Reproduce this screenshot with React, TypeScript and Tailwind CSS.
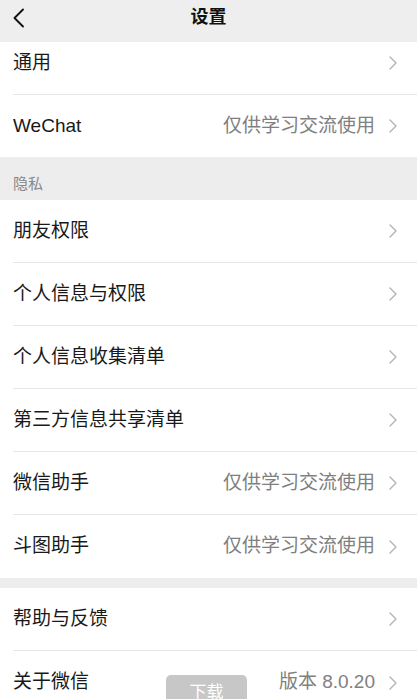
import React from 'react';

const FONT = "font-['Liberation_Sans','Noto_Sans_CJK_SC',sans-serif]";

const Chevron: React.FC = () => (
  <svg width="10" height="14" viewBox="0 0 10 14" className="shrink-0">
    <polyline points="2,1 8,7 2,13" fill="none" stroke="#b3b3b3" strokeWidth="1.4" strokeLinecap="round" strokeLinejoin="round" />
  </svg>
);

interface RowProps {
  label: string;
  value?: string;
  last?: boolean;
  className?: string;
}

const Row: React.FC<RowProps> = ({ label, value, last, className }) => (
  <div className={`bg-white pl-[13px] ${className ?? 'h-[63px]'}`}>
    <div className={`h-full flex items-center pr-[19px] ${last ? '' : 'border-b border-[#e6e6e6]'}`}>
      <span className="flex-1 text-[19px] text-[#191919]">{label}</span>
      {value && <span className="text-[19px] text-[#808080] mr-[13px]">{value}</span>}
      <Chevron />
    </div>
  </div>
);

export default function App() {
  return (
    <div className={`relative w-[417px] h-[699px] overflow-hidden bg-[#ededed] ${FONT}`}>
      {/* header */}
      <div className="h-[42px] flex items-center justify-center relative bg-[#eeeeee]">
        <svg width="14" height="20" viewBox="0 0 14 20" className="absolute left-[12px] top-[8px]">
          <polyline points="11,1.5 2.5,10 11,18.5" fill="none" stroke="#111" strokeWidth="1.9" strokeLinecap="round" strokeLinejoin="round" />
        </svg>
        <span className="text-[18px] font-bold text-[#111] -mt-[7px]">设置</span>
      </div>

      {/* first group (partially scrolled) */}
      <div className="bg-white pl-[13px] h-[53px]">
        <div className="h-full flex items-center pr-[19px] pb-[10px] border-b border-[#e6e6e6]">
          <span className="flex-1 text-[19px] text-[#191919]">通用</span>
          <Chevron />
        </div>
      </div>
      <Row label="WeChat" value="仅供学习交流使用" last className="h-[62px]" />

      <div className="h-[43px] flex items-center pl-[13px] pt-[12px]">
        <span className="text-[15px] text-[#888]">隐私</span>
      </div>

      <Row label="朋友权限" />
      <Row label="个人信息与权限" />
      <Row label="个人信息收集清单" />
      <Row label="第三方信息共享清单" />
      <Row label="微信助手" value="仅供学习交流使用" />
      <Row label="斗图助手" value="仅供学习交流使用" last />

      <div className="h-[10px]" />

      <Row label="帮助与反馈" />
      <Row label="关于微信" value="版本 8.0.20" last />

      {/* floating download button */}
      <div className="absolute left-[166px] top-[675px] w-[81px] h-[36px] rounded-[5px] bg-[#c7c7c7] flex items-center justify-center">
        <span className="text-[17px] text-white">下载</span>
      </div>
    </div>
  );
}
